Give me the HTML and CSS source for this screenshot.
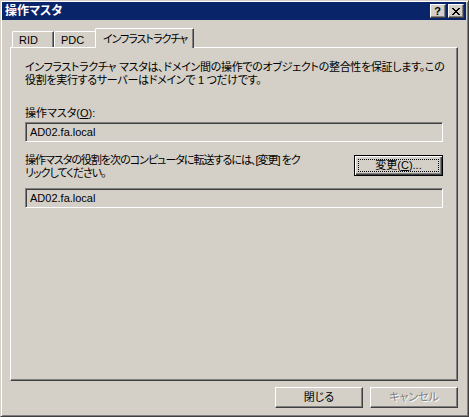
FILE: index.html
```html
<!DOCTYPE html>
<html lang="ja">
<head>
<meta charset="utf-8">
<link rel="stylesheet" href="styles.css">
</head>
<body>
<div class="window">
  <div class="caption">
    <span class="title">操作マスタ</span>
    <div class="caption-btns">
      <span class="cbtn help">?</span>
      <span class="cbtn close"><svg width="8" height="7" viewBox="0 0 8 7" shape-rendering="crispEdges"><path d="M0 0h2v1h-2zM6 0h2v1h-2zM1 1h2v1h-2zM5 1h2v1h-2zM2 2h4v1h-4zM3 3h2v1h-2zM2 4h4v1h-4zM1 5h2v1h-2zM5 5h2v1h-2zM0 6h2v1h-2zM6 6h2v1h-2z" fill="#000"/></svg></span>
    </div>
  </div>
  <div class="body">
    <div class="tabs">
      <div class="tab tab-rid">RID</div>
      <div class="tab tab-pdc">PDC</div>
      <div class="tab selected">インフラストラクチャ</div>
    </div>
    <div class="panel">
      <p class="desc">インフラストラクチャ マスタは、ドメイン間の操作でのオブジェクトの整合性を保証します。この<br>役割を実行するサーバーはドメインで 1 つだけです。</p>
      <div class="label">操作マスタ(<u>O</u>):</div>
      <div class="field">AD02.fa.local</div>
      <div class="transfer">
        <p class="transfer-text">操作マスタの役割を次のコンピュータに転送するには、[変更] をク<br>リックしてください。</p>
        <button class="btn default"><span class="focus">変更(<u>C</u>)...</span></button>
      </div>
      <div class="field field2">AD02.fa.local</div>
    </div>
    <div class="footer">
      <button class="btn">閉じる</button>
      <button class="btn disabled">キャンセル</button>
    </div>
  </div>
</div>
</body>
</html>
```

FILE: styles.css
```css
* { box-sizing: border-box; }
html, body { margin: 0; padding: 0; }
body {
  width: 469px;
  height: 417px;
  background: #d4d0c8;
  font-family: "Liberation Sans", "Noto Sans CJK JP", sans-serif;
  font-size: 11px;
  font-feature-settings: "palt";
  color: #000;
  overflow: hidden;
}
.window {
  width: 469px;
  height: 417px;
  border: 1px solid;
  border-color: #d4d0c8 #404040 #404040 #d4d0c8;
  box-shadow: inset 1px 1px #fff, inset -1px -1px #808080;
  padding: 1px 2px 2px 1px;
  display: flex;
  flex-direction: column;
  background: #d4d0c8;
}
.caption {
  height: 18px;
  background: #0a246a;
  display: flex;
  align-items: center;
  justify-content: space-between;
  padding: 0 2px 0 3px;
}
.title {
  color: #fff;
  font-weight: bold;
  font-size: 12px;
  line-height: 18px;
}
.caption-btns {
  display: flex;
  gap: 2px;
}
.cbtn {
  width: 16px;
  height: 14px;
  background: #d4d0c8;
  border: 1px solid;
  border-color: #fff #404040 #404040 #fff;
  box-shadow: inset -1px -1px #808080;
  display: flex;
  align-items: center;
  justify-content: center;
}
.help {
  font-family: "Liberation Sans", sans-serif;
  font-weight: bold;
  font-size: 11px;
  line-height: 12px;
  padding-right: 1px;
}
.close svg { display: block; margin-left: -1px; }
.body {
  flex: 1;
  display: flex;
  flex-direction: column;
  padding: 8px 8px 6px 8px;
}
.tabs {
  height: 19px;
  display: flex;
  align-items: flex-end;
  padding-left: 2px;
}
.tab {
  height: 16px;
  border-top: 1px solid #fff;
  border-left: 1px solid #fff;
  border-right: 1px solid #404040;
  border-top-left-radius: 2px;
  border-top-right-radius: 1px;
  box-shadow: inset -1px 0 #808080;
  background: #d4d0c8;
  line-height: 14px;
  padding: 1px 0 0 6px;
  white-space: nowrap;
}
.tab-rid { width: 42px; }
.tab-pdc { width: 43px; }
.tab.selected {
  position: relative;
  z-index: 1;
  height: 20px;
  margin-bottom: -1px;
  margin-left: -2px;
  width: 99px;
  padding: 3px 0 0 7px;
  line-height: 14px;
  letter-spacing: -1px;
}
.panel {
  height: 334px;
  border: 1px solid;
  border-color: #fff #404040 #404040 #fff;
  box-shadow: inset -1px -1px #808080;
  padding: 13px 14px 0 14px;
  display: flex;
  flex-direction: column;
}
.desc, .transfer-text {
  margin: 0;
  line-height: 13px;
  white-space: nowrap;
}
.desc { letter-spacing: -0.3px; }
.transfer-text { letter-spacing: -1px; }
.label {
  margin-top: 20px;
  line-height: 13px;
}
.field {
  margin-top: 2px;
  height: 20px;
  border: 1px solid;
  border-color: #808080 #fff #fff #808080;
  box-shadow: inset 1px 1px #404040, inset -1px -1px #d4d0c8;
  padding: 0 4px;
  line-height: 18px;
}
.transfer {
  margin-top: 12px;
  display: flex;
  justify-content: space-between;
  align-items: flex-start;
}
.field2 { margin-top: 8px; }
.btn {
  width: 88px;
  height: 21px;
  padding: 0;
  margin: 0;
  font: inherit;
  color: #000;
  background: #d4d0c8;
  border: 1px solid;
  border-color: #fff #404040 #404040 #fff;
  box-shadow: inset -1px -1px #808080;
  line-height: 17px;
  text-align: center;
}
.btn.default {
  margin-top: 1px;
  width: 89px;
  border: 1px solid #000;
  box-shadow: inset 1px 1px #fff, inset -1px -1px #404040, inset -2px -2px #808080;
  padding: 3px;
  display: flex;
}
.focus {
  flex: 1;
  border: 1px dotted #000;
  line-height: 11px;
  text-align: center;
}
.footer {
  margin-top: 6px;
  display: flex;
  justify-content: flex-end;
  gap: 7px;
}
.btn.disabled {
  color: #808080;
  text-shadow: 1px 1px #fff;
}
```
